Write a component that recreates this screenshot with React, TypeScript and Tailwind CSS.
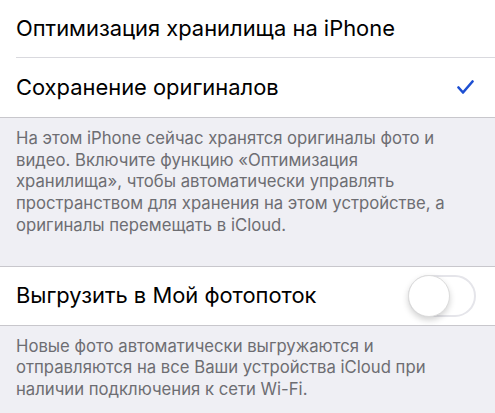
export default function App() {
  return (
    <div className="w-[495px] h-[413px] overflow-hidden bg-[#efeff4] font-['Inter','Noto_Sans',sans-serif]">
      {/* Storage options */}
      <div className="bg-white border-b border-[#c8c7cc]">
        <div className="h-[57px] flex items-center pl-4 text-[21.9px] text-black">
          Оптимизация хранилища на iPhone
        </div>
        <div className="ml-4 h-px bg-[#d9d9de]"></div>
        <div className="h-[59px] flex items-center justify-between pl-4 pr-[21px] text-[21.9px] text-black">
          <span>Сохранение оригиналов</span>
          <svg className="w-[17px] h-[15px]" viewBox="0 0 17 15" fill="none">
            <path d="M1.5 7.5L6 12.5L15.5 1.5" stroke="#1d4fd2" strokeWidth={2.6} strokeLinecap="round" strokeLinejoin="round" />
          </svg>
        </div>
      </div>

      <p className="pl-4 pr-[32px] pt-[10px] pb-[29px] text-[16.7px] leading-[21.7px] text-[#6d6d72]">
        На этом iPhone сейчас хранятся оригиналы фото и видео. Включите функцию «Оптимизация хранилища», чтобы автоматически управлять пространством для хранения на этом устройстве, а оригиналы перемещать в iCloud.
      </p>

      {/* My Photo Stream */}
      <div className="bg-white border-y border-[#c8c7cc] h-[60px] flex items-center justify-between pl-4 pr-[19px]">
        <span className="text-[21.9px] text-black">Выгрузить в Мой фотопоток</span>
        <div className="w-[68px] h-[42px] rounded-full border-2 border-[#e5e5ea] bg-white relative">
          <div className="absolute -left-[2px] -top-[2px] w-[42px] h-[42px] rounded-full bg-white border border-[#dcdcdc] shadow-[0_3px_6px_rgba(0,0,0,0.18)]"></div>
        </div>
      </div>

      <p className="pl-4 pr-[32px] pt-[10px] text-[16.7px] leading-[21.7px] text-[#6d6d72]">
        Новые фото автоматически выгружаются и отправляются на все Ваши устройства iCloud при наличии подключения к сети Wi-Fi.
      </p>
    </div>
  );
}
